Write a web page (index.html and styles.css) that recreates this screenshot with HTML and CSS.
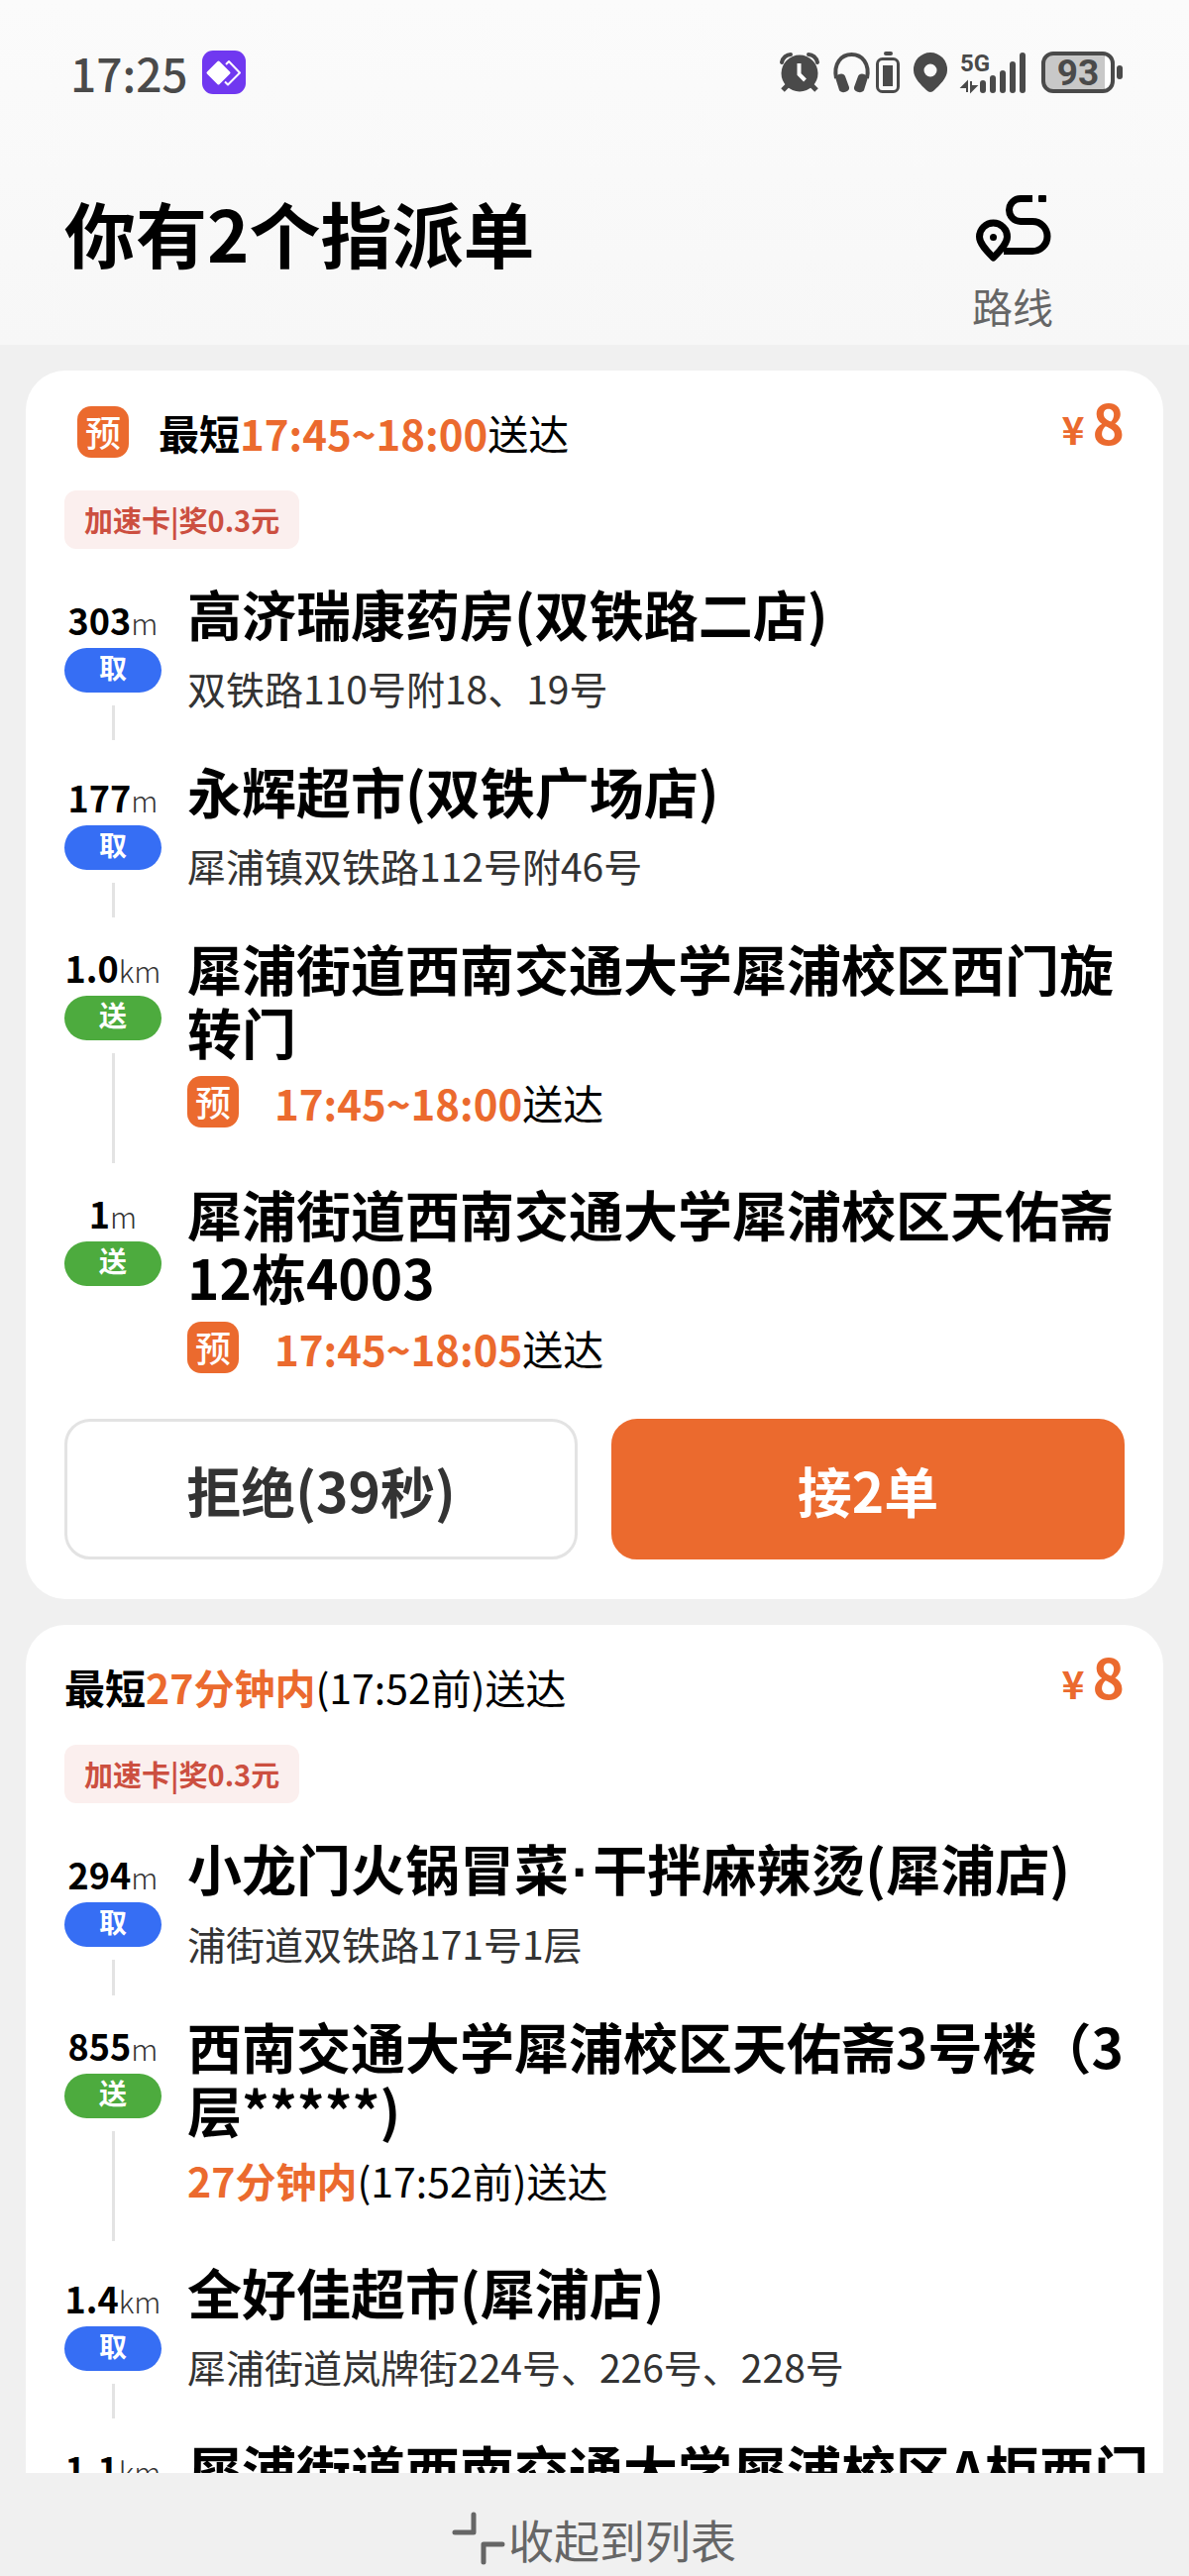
FILE: index.html
```html
<!DOCTYPE html>
<html lang="zh-CN">
<head>
  <meta charset="UTF-8" />
  <meta name="viewport" content="width=device-width, initial-scale=1.0"/>
  <title>指派单</title>
  <link rel="stylesheet" href="styles.css">
</head>
<body>
  <header class="top">
    <!-- 状态栏 -->
    <div class="status-bar">
      <span class="clock">17:25</span>
      <svg class="app-icon" width="44" height="44" viewBox="0 0 44 44">
        <rect width="44" height="44" rx="11" fill="#7038f0"/>
        <path d="M24 14l3-3 11 11.500-12 12-3-3" fill="none" stroke="#fff" stroke-width="2" stroke-linejoin="round"/>
        <path d="M16.500 12L27 22.500 16.500 33 6 22.500z" fill="#fff" stroke="#fff" stroke-width="3" stroke-linejoin="round"/>
      </svg>
      <div class="status-icons">
        <svg width="42" height="42" viewBox="0 0 42 42">
          <circle cx="21" cy="22" r="18.500" fill="#4a4a4a"/>
          <path d="M3 11c1-5 5-8 9-8M39 11c-1-5-5-8-9-8" fill="none" stroke="#4a4a4a" stroke-width="4" stroke-linecap="round"/>
          <path d="M9 34l-5 5M33 34l5 5" stroke="#4a4a4a" stroke-width="5"/>
          <path d="M20.500 12v11l6 6" fill="none" stroke="#fff" stroke-width="4"/>
        </svg>
        <svg class="headphones" width="68" height="42" viewBox="0 0 68 42">
          <path d="M3 27C0 12 8 3 18.500 3S37 12 34 27" fill="none" stroke="#4a4a4a" stroke-width="4"/>
          <path d="M2 26c4-5 9-4 10-1l4 11c1 5-8 7-10 3zM35 26c-4-5-9-4-10-1l-4 11c-1 5 8 7 10 3z" fill="#4a4a4a"/>
          <rect x="51" y="0" width="9" height="4" rx="2" fill="#4a4a4a"/>
          <rect x="44.500" y="7.500" width="21" height="33" rx="5" fill="none" stroke="#4a4a4a" stroke-width="3"/>
          <rect x="50" y="14" width="10" height="21" fill="#4a4a4a"/>
        </svg>
        <svg class="pin" width="36" height="42" viewBox="0 0 36 42">
          <path fill-rule="evenodd" fill="#4a4a4a" d="M18 1a17 17 0 0 1 17 18c0 8-8 15-13 20q-4 4-8 0C9 34 1 27 1 19A17 17 0 0 1 18 1zm0 11.500a6.500 6.500 0 1 0 0 13 6.500 6.500 0 0 0 0-13z"/>
        </svg>
        <svg class="signal" width="67" height="42" viewBox="0 0 67 42">
          <text x="0" y="20" class="signal-text">5G</text>
          <path d="M7 41V31l-5 5h5M11 30v10l5-5h-5" fill="#4a4a4a" stroke="#4a4a4a" stroke-width="2"/>
          <path d="M23 32v7M33 27v12M43 22v17M53 13v26M63 4v35" stroke="#4a4a4a" stroke-width="6" stroke-linecap="round"/>
        </svg>
        <svg class="battery" width="83" height="42" viewBox="0 0 83 42">
          <rect x="2" y="2" width="70" height="38" rx="10" fill="#fff"/>
          <path d="M12 2h52v38H12A10 10 0 0 1 2 30V12A10 10 0 0 1 12 2z" fill="#c8c8c8"/>
          <rect x="2" y="2" width="70" height="38" rx="10" fill="none" stroke="#4a4a4a" stroke-width="4"/>
          <rect x="76" y="14" width="6" height="14" rx="3" fill="#4a4a4a"/>
          <text x="37" y="34" text-anchor="middle" class="battery-text">93</text>
        </svg>
      </div>
    </div>
    <div class="title-row">
      <h1>你有2个指派单</h1>
      <button type="button" class="route">
        <svg width="74" height="67" viewBox="0 0 74 67">
          <path d="M57 3.500H45a11.500 11.500 0 0 0 0 23h12a15 15 0 0 1 0 30H28" fill="none" stroke="#000" stroke-width="7"/>
          <rect x="63" y="0" width="8" height="7" rx="1" fill="#000"/>
          <path d="M17.500 28a14 14 0 0 1 14 14c0 7-8 15-14 21-6-6-14-14-14-21a14 14 0 0 1 14-14z" fill="#f8f8f8" stroke="#000" stroke-width="7" stroke-linejoin="round"/>
          <circle cx="17.500" cy="42.500" r="3.500" fill="#000"/>
        </svg>
        <span>路线</span>
      </button>
    </div>
  </header>

  <main class="orders">
    <section class="card">
      <div class="card-head">
        <p class="deadline"><span class="badge first">预</span><b>最短</b><b class="time range">17:45~18:00</b>送达</p>
        <p class="price"><small>¥</small>8</p>
      </div>
      <span class="tag">加速卡|奖0.3元</span>

      <div class="stop pickup">
        <div class="side">
          <p class="distance">303<small>m</small></p>
          <span class="pill">取</span>
          <i class="line"></i>
        </div>
        <div class="info">
          <h2>高济瑞康药房(双铁路二店)</h2>
          <p class="address">双铁路110号附18、19号</p>
        </div>
      </div>
      <div class="stop pickup">
        <div class="side">
          <p class="distance">177<small>m</small></p>
          <span class="pill">取</span>
          <i class="line"></i>
        </div>
        <div class="info">
          <h2>永辉超市(双铁广场店)</h2>
          <p class="address">犀浦镇双铁路112号附46号</p>
        </div>
      </div>
      <div class="stop drop">
        <div class="side">
          <p class="distance">1.0<small>km</small></p>
          <span class="pill">送</span>
          <i class="line"></i>
        </div>
        <div class="info">
          <h2>犀浦街道西南交通大学犀浦校区西门旋转门</h2>
          <p class="eta"><span class="badge">预</span><b class="time range">17:45~18:00</b>送达</p>
        </div>
      </div>
      <div class="stop drop">
        <div class="side">
          <p class="distance">1<small>m</small></p>
          <span class="pill">送</span>
        </div>
        <div class="info">
          <h2>犀浦街道西南交通大学犀浦校区天佑斋12栋4003</h2>
          <p class="eta"><span class="badge">预</span><b class="time range">17:45~18:05</b>送达</p>
        </div>
      </div>

      <div class="actions">
        <button type="button" class="reject">拒绝(39秒)</button>
        <button type="button" class="accept">接2单</button>
      </div>
    </section>

    <section class="card">
      <div class="card-head">
        <p class="deadline"><b>最短</b><b class="time">27分钟内</b>(17:52前)送达</p>
        <p class="price"><small>¥</small>8</p>
      </div>
      <span class="tag">加速卡|奖0.3元</span>

      <div class="stop pickup">
        <div class="side">
          <p class="distance">294<small>m</small></p>
          <span class="pill">取</span>
          <i class="line"></i>
        </div>
        <div class="info">
          <h2>小龙门火锅冒菜<span class="dot">·</span>干拌麻辣烫(犀浦店)</h2>
          <p class="address">浦街道双铁路171号1层</p>
        </div>
      </div>
      <div class="stop drop">
        <div class="side">
          <p class="distance">855<small>m</small></p>
          <span class="pill">送</span>
          <i class="line"></i>
        </div>
        <div class="info">
          <h2>西南交通大学犀浦校区天佑斋3号楼（3层*****)</h2>
          <p class="eta"><b class="time">27分钟内</b>(17:52前)送达</p>
        </div>
      </div>
      <div class="stop pickup">
        <div class="side">
          <p class="distance">1.4<small>km</small></p>
          <span class="pill">取</span>
          <i class="line"></i>
        </div>
        <div class="info">
          <h2>全好佳超市(犀浦店)</h2>
          <p class="address">犀浦街道岚牌街224号、226号、228号</p>
        </div>
      </div>
      <div class="stop drop">
        <div class="side">
          <p class="distance">1.1<small>km</small></p>
        </div>
        <div class="info">
          <h2 class="one-line">犀浦街道西南交通大学犀浦校区A柜西门</h2>
        </div>
      </div>
    </section>
  </main>

  <!-- 底部收起按钮 -->
  <footer class="bottom">
    <button type="button" class="collapse">
      <svg width="52" height="52" viewBox="0 0 52 52">
        <path d="M21 2v18H2M31 50V32h19" fill="none" stroke="#666" stroke-width="5" stroke-linecap="round" stroke-linejoin="round"/>
      </svg>
      <span>收起到列表</span>
    </button>
  </footer>
</body>
</html>
```
FILE: styles.css
```css
* { margin: 0; padding: 0; box-sizing: border-box; }
body {
  font-family: "Noto Sans CJK SC", sans-serif;
  background-color: #f0f0f0;
  color: #000;
  display: flex;
  flex-direction: column;
  height: 100vh;
  overflow: hidden;
}
button {
  font-family: inherit;
  border: none;
  background: none;
  cursor: pointer;
}
small {
  font-size: inherit;
}
svg {
  overflow: visible;
}

/* 顶部 */
.top {
  background: linear-gradient(#fbfbfb, #f7f7f7);
  padding-bottom: 16px;
}
.status-bar {
  display: flex;
  align-items: center;
  height: 146px;
  padding: 0 66px 0 71px;
}
.clock {
  font-size: 46px;
  line-height: 52px;
  font-weight: 500;
  color: #4a4a4a;
}
.app-icon {
  margin-left: 14px;
}
.status-icons {
  display: flex;
  align-items: center;
  margin-left: auto;
}
.headphones {
  margin-left: 13px;
}
.pin {
  margin-left: 12px;
}
.signal {
  margin-left: 12px;
}
.signal-text {
  font-family: Roboto, sans-serif;
  font-size: 24px;
  font-weight: 700;
  fill: #4a4a4a;
}
.battery {
  margin-left: 15px;
}
.battery-text {
  font-family: Roboto, sans-serif;
  font-size: 37px;
  font-weight: 700;
  fill: #4a4a4a;
}
.title-row {
  display: flex;
  justify-content: space-between;
  align-items: flex-start;
  padding: 48px 137px 0 65px;
}
h1 {
  font-size: 72px;
  line-height: 80px;
  font-weight: 700;
}
.route {
  display: flex;
  flex-direction: column;
  align-items: center;
  gap: 20px;
  padding-top: 3px;
  font-size: 41px;
  line-height: 48px;
  color: #666;
}

/* 订单卡片 */
.orders {
  flex: 1;
  min-height: 0;
  overflow: hidden;
  display: flex;
  flex-direction: column;
  gap: 26px;
  padding: 26px 26px 0;
}
.card {
  flex-shrink: 0;
  background-color: #fff;
  border-radius: 40px;
  padding: 24px 39px 40px;
}
.card-head {
  display: flex;
  justify-content: space-between;
  align-items: flex-start;
  height: 97px;
}
.deadline {
  display: flex;
  align-items: center;
  height: 76px;
  font-size: 41px;
}
.time {
  color: #eb6a2e;
}
.range {
  font-size: 42px;
}
.badge {
  width: 52px;
  height: 52px;
  border-radius: 14px;
  background-color: #eb6a2e;
  color: #fff;
  font-size: 36px;
  line-height: 50px;
  font-weight: 500;
  text-align: center;
  margin-right: 36px;
}
.badge.first {
  margin: 0 30px 0 13px;
}
.price {
  display: flex;
  align-items: baseline;
  gap: 8px;
  font-size: 55px;
  line-height: 54px;
  font-weight: 700;
  color: #eb6a2e;
}
.price small {
  font-size: 39px;
}
.tag {
  display: block;
  width: fit-content;
  padding: 0 20px;
  border-radius: 12px;
  background-color: #fbefee;
  color: #cc4f40;
  font-size: 29px;
  line-height: 59px;
  font-weight: 700;
  margin-bottom: 32px;
}

/* 取送点 */
.stop {
  display: flex;
  gap: 26px;
}
.side {
  width: 98px;
  flex-shrink: 0;
  display: flex;
  flex-direction: column;
  align-items: center;
}
.pickup .side {
  padding-top: 20px;
}
.drop .side {
  padding-top: 13px;
}
.distance {
  font-size: 36px;
  line-height: 39px;
  font-weight: 700;
  white-space: nowrap;
}
.distance small {
  font-size: 30px;
  font-weight: 300;
  color: #333;
}
.pill {
  width: 98px;
  height: 45px;
  margin-top: 6px;
  border-radius: 23px;
  color: #fff;
  font-size: 28px;
  line-height: 39px;
  font-weight: 700;
  text-align: center;
}
.pickup .pill {
  background-color: #366ef4;
}
.drop .pill {
  background-color: #4dab3e;
}
.line {
  flex: 1;
  width: 3px;
  margin: 13px 0 18px;
  background-color: #e3e3e3;
}
.info {
  flex: 1;
  min-width: 0;
}
h2 {
  font-size: 55px;
  line-height: 64px;
  font-weight: 700;
}
.one-line {
  white-space: nowrap;
}
.dot {
  font-family: "Liberation Sans", sans-serif;
  line-height: 1;
  margin: 0 3px;
}
.address {
  margin: 18px 0 45px;
  font-size: 39px;
  line-height: 52px;
  color: #333;
}
.eta {
  display: flex;
  align-items: center;
  height: 52px;
  margin: 14px 0 54px;
  font-size: 41px;
}
.actions {
  display: flex;
  gap: 34px;
}
.actions button {
  flex: 1;
  height: 142px;
  border-radius: 26px;
  font-size: 55px;
  font-weight: 700;
}
.actions .reject {
  border: 3px solid #e3e3e3;
  color: #333;
}
.actions .accept {
  border: 3px solid #eb6a2e;
  background-color: #eb6a2e;
  color: #fff;
}
.stop:has(+ .actions) .eta {
  margin-bottom: 46px;
}

/* 底部 */
.bottom {
  height: 104px;
  display: flex;
  justify-content: center;
  align-items: center;
  padding-top: 28px;
}
.collapse {
  display: flex;
  align-items: center;
  gap: 4px;
  font-size: 46px;
  line-height: 52px;
  color: #666;
}
```
